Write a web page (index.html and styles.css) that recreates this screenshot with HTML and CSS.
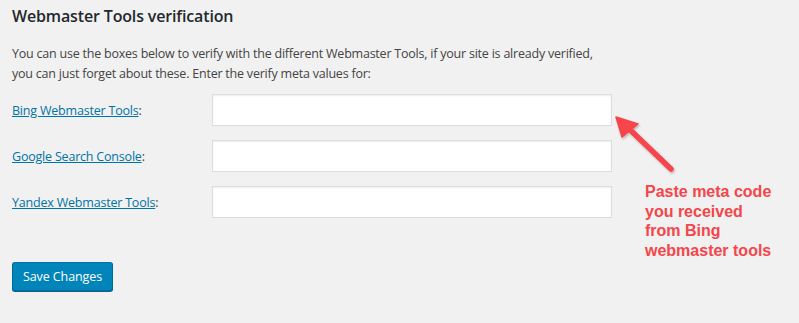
FILE: index.html
```html
<!DOCTYPE html>
<html>
<head>
<meta charset="utf-8">
<link rel="stylesheet" href="styles.css">
</head>
<body>
<div class="wrap">
  <h2 class="title">Webmaster Tools verification</h2>
  <p class="desc">You can use the boxes below to verify with the different Webmaster Tools, if your site is already verified,<br>you can just forget about these. Enter the verify meta values for:</p>
  <div class="form">
    <div class="row">
      <label class="label"><a href="#">Bing Webmaster Tools</a>:</label>
      <input class="field" type="text">
    </div>
    <div class="row">
      <label class="label"><a href="#">Google Search Console</a>:</label>
      <input class="field" type="text">
    </div>
    <div class="row">
      <label class="label"><a href="#">Yandex Webmaster Tools</a>:</label>
      <input class="field" type="text">
    </div>
  </div>
  <button class="save" type="button">Save Changes</button>
</div>
<div class="note">
  <svg class="arrow" width="80" height="70" viewBox="0 0 80 70">
    <defs>
      <filter id="sh" x="-20%" y="-20%" width="140%" height="140%">
        <feDropShadow dx="1" dy="1.5" stdDeviation="1.2" flood-color="#000" flood-opacity="0.25"/>
      </filter>
    </defs>
    <g filter="url(#sh)">
      <line x1="14" y1="14" x2="61" y2="59" stroke="#f6454b" stroke-width="5.5" stroke-linecap="round"/>
      <polygon points="6,7 12,27 28,14" fill="#f6454b" stroke="#f6454b" stroke-width="1.5" stroke-linejoin="round"/>
    </g>
  </svg>
  <div class="note-text">Paste meta code<br>you received<br>from Bing<br>webmaster tools</div>
</div>
</body>
</html>
```
FILE: styles.css
```css
html, body {
  margin: 0;
  padding: 0;
}
body {
  background: #f1f1f1;
  font-family: "Open Sans", "Noto Sans", sans-serif;
  font-size: 12.5px;
  color: #444;
  width: 799px;
  height: 323px;
  overflow: hidden;
  position: relative;
}
.wrap {
  padding: 4px 12px 0 12px;
}
.title {
  margin: 0;
  font-size: 16px;
  font-weight: 600;
  letter-spacing: -0.15px;
  color: #23282d;
  line-height: 24px;
}
.desc {
  margin: 16px 0 0 0;
  line-height: 20px;
  font-size: 12.5px;
  letter-spacing: -0.22px;
}
.form {
  margin-top: 10px;
  display: flex;
  flex-direction: column;
  gap: 14px;
}
.row {
  display: flex;
  align-items: center;
}
.label {
  width: 200px;
  flex: none;
  letter-spacing: -0.2px;
}
.label a {
  color: #0073aa;
}
.field {
  box-sizing: border-box;
  width: 400px;
  height: 32px;
  margin: 0;
  border: 1px solid #ddd;
  background: #fff;
  box-shadow: inset 0 1px 2px rgba(0,0,0,0.07);
  padding: 3px 5px;
}
.save {
  margin-top: 44px;
  box-sizing: border-box;
  height: 29px;
  padding: 0 10px;
  background: #0085ba;
  border: 1px solid;
  border-color: #0073aa #006799 #006799;
  border-radius: 3px;
  box-shadow: 0 1px 0 #006799;
  color: #fff;
  font-family: "Open Sans", "Noto Sans", sans-serif;
  font-size: 12.5px;
  letter-spacing: -0.1px;
  line-height: 26px;
}
.note {
  position: absolute;
  left: 610px;
  top: 110px;
}
.arrow {
  display: block;
}
.note-text {
  position: absolute;
  left: 35px;
  top: 72px;
  white-space: nowrap;
  font-family: "Liberation Sans", Arial, sans-serif;
  font-weight: bold;
  font-size: 16px;
  line-height: 19.5px;
  color: #f6454b;
}
```
